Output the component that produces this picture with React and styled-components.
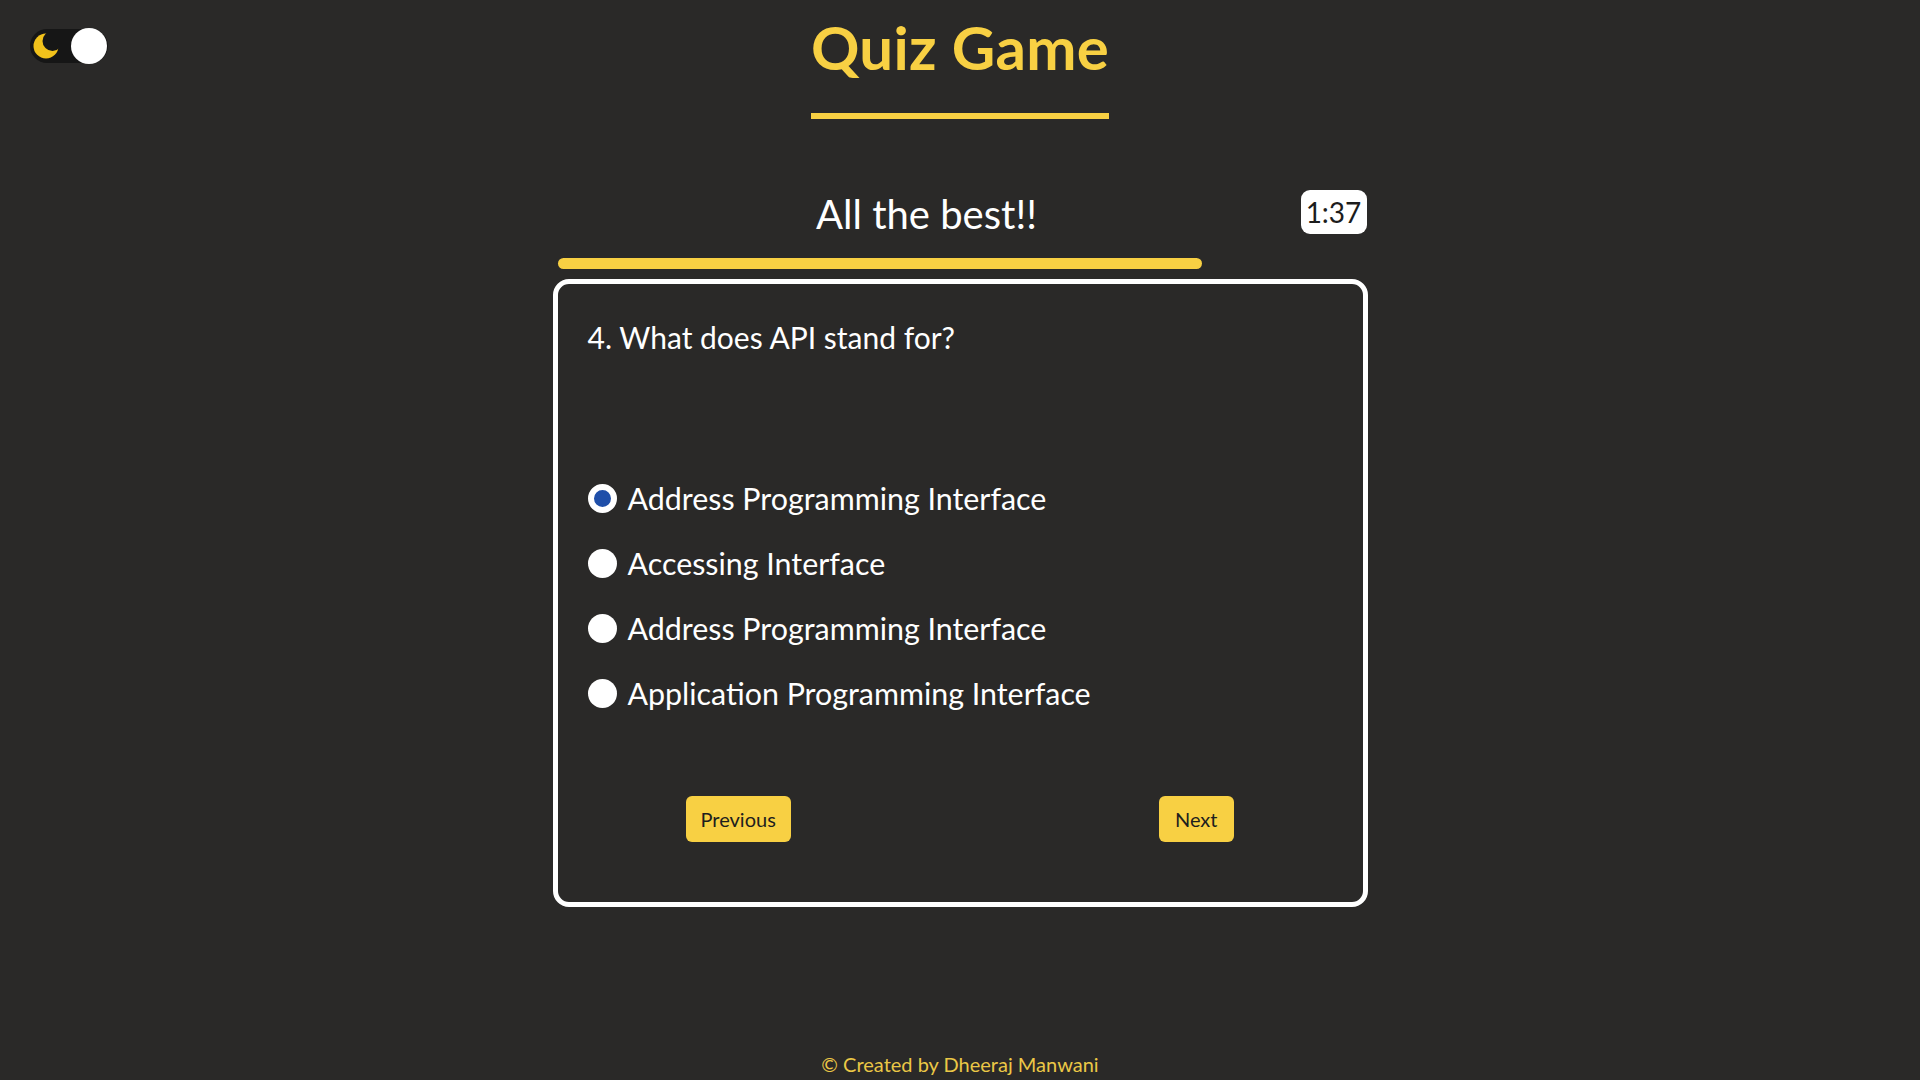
import React, { useState } from 'react'
import styled, { createGlobalStyle } from 'styled-components'

const YELLOW = '#f8d043'
const BG = '#2a2928'

const GlobalStyle = createGlobalStyle`
  html, body {
    margin: 0;
    padding: 0;
    background: ${BG};
  }
  body {
    font-family: Lato, "Noto Sans", "Open Sans", sans-serif;
    color: #ffffff;
  }
  * {
    box-sizing: border-box;
  }
`

const Page = styled.div`
  min-height: 100vh;
  display: flex;
  flex-direction: column;
  align-items: center;
`

const TopBar = styled.header`
  width: 100%;
  display: grid;
  grid-template-columns: 1fr auto 1fr;
  align-items: start;
`

const ToggleWrap = styled.div`
  padding: 29px 0 0 30px;
`

const Toggle = styled.button`
  position: relative;
  width: 78px;
  height: 34px;
  padding: 0 0 0 3px;
  border: none;
  border-radius: 17px;
  background: #161616;
  display: flex;
  align-items: center;
  cursor: pointer;
`

const Knob = styled.span`
  position: absolute;
  top: -1px;
  left: ${props => (props.on ? '41px' : '0')};
  width: 36px;
  height: 36px;
  border-radius: 50%;
  background: #ffffff;
  transition: left 0.2s;
`

const TitleBlock = styled.div`
  display: flex;
  flex-direction: column;
  align-items: center;
  padding-top: 11px;
`

const Title = styled.h1`
  margin: 0;
  font-size: 60px;
  line-height: 72px;
  font-weight: 700;
  color: ${YELLOW};
  letter-spacing: 0.3px;
`

const TitleLine = styled.div`
  width: 298px;
  height: 6px;
  margin-top: 30px;
  background: ${YELLOW};
`

const Quiz = styled.main`
  width: 815px;
  margin-top: 71px;
`

const QuizHead = styled.div`
  display: flex;
  align-items: flex-start;
  height: 48px;
  padding-right: 1px;
`

const Greeting = styled.h2`
  flex: 1;
  margin: 0;
  text-align: center;
  font-size: 40px;
  line-height: 48px;
  font-weight: 400;
`

const Timer = styled.div`
  width: 66px;
  height: 44px;
  border-radius: 9px;
  background: #ffffff;
  color: #1c1c1c;
  font-size: 28px;
  line-height: 44px;
  text-align: center;
`

const Track = styled.div`
  margin: 20px 0 0 5px;
  width: 805px;
  height: 11px;
`

const Fill = styled.div`
  height: 100%;
  border-radius: 6px;
  background: ${YELLOW};
`

const Card = styled.section`
  margin-top: 10px;
  height: 628px;
  border: 5px solid #ffffff;
  border-radius: 16px;
  padding: 34px 30px 60px 30px;
  display: flex;
  flex-direction: column;
`

const Question = styled.p`
  margin: 0 0 122px 0;
  font-size: 30px;
  line-height: 38px;
`

const Options = styled.div`
  display: flex;
  flex-direction: column;
  gap: 25px;
`

const Option = styled.label`
  display: flex;
  align-items: center;
  gap: 11px;
  height: 40px;
  font-size: 30.4px;
  line-height: 40px;
  cursor: pointer;
`

const Radio = styled.span`
  width: 29px;
  height: 29px;
  border-radius: 50%;
  background: ${props => (props.checked ? '#1f4fa9' : '#ffffff')};
  border: ${props => (props.checked ? '6px solid #ffffff' : 'none')};
  flex-shrink: 0;
`

const Actions = styled.div`
  margin-top: auto;
  display: flex;
  justify-content: space-between;
  padding: 0 99px 0 98px;
`

const Button = styled.button`
  height: 46px;
  padding: 0 ${props => props.pad || 15}px;
  border: none;
  border-radius: 6px;
  background: ${YELLOW};
  color: #1e1e1e;
  font-family: Lato, "Noto Sans", sans-serif;
  font-size: 20px;
  cursor: pointer;
`

const Footer = styled.footer`
  margin-top: auto;
  padding-bottom: 4px;
  font-size: 20px;
  line-height: 24px;
  color: #ebc746;
`

const Moon = () => (
  <svg width="28" height="28" viewBox="0 0 28 28">
    <defs>
      <mask id="moon-cut">
        <rect width="28" height="28" fill="#fff" />
        <circle cx="19.5" cy="9" r="10" fill="#000" />
      </mask>
    </defs>
    <circle cx="13" cy="14" r="12.5" fill="#f2c21b" mask="url(#moon-cut)" />
  </svg>
)

const options = [
  'Address Programming Interface',
  'Accessing Interface',
  'Address Programming Interface',
  'Application Programming Interface'
]

const App = () => {
  const [dark, setDark] = useState(true)
  const [picked, setPicked] = useState(0)

  return (
    <>
      <GlobalStyle />
      <Page>
        <TopBar>
          <ToggleWrap>
            <Toggle onClick={() => setDark(!dark)} aria-label="theme">
              <Moon />
              <Knob on={dark ? 1 : 0} />
            </Toggle>
          </ToggleWrap>
          <TitleBlock>
            <Title>Quiz Game</Title>
            <TitleLine />
          </TitleBlock>
          <div />
        </TopBar>

        <Quiz>
          <QuizHead>
            <Greeting>All the best!!</Greeting>
            <Timer>1:37</Timer>
          </QuizHead>
          <Track>
            <Fill style={{ width: `${(4 / 5) * 100}%` }} />
          </Track>
          <Card>
            <Question>4. What does API stand for?</Question>
            <Options>
              {options.map((text, i) => (
                <Option key={i} onClick={() => setPicked(i)}>
                  <Radio checked={picked === i} />
                  {text}
                </Option>
              ))}
            </Options>
            <Actions>
              <Button>Previous</Button>
              <Button pad={16}>Next</Button>
            </Actions>
          </Card>
        </Quiz>

        <Footer>© Created by Dheeraj Manwani</Footer>
      </Page>
    </>
  )
}

export default App
